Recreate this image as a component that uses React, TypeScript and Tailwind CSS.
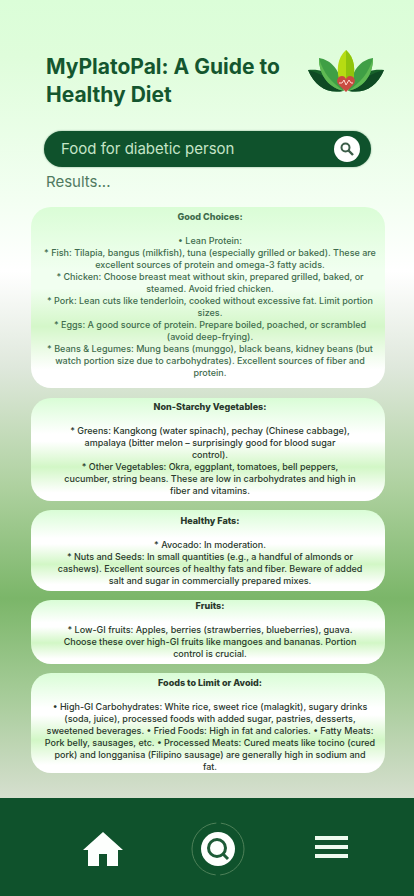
import type { ReactNode } from "react";

type CardProps = {
  title: string;
  lines: string[];
  className: string;
};

function FoodCard({ title, lines, className }: CardProps) {
  return (
    <section className={`rounded-[20px] pl-1 text-center text-[9px] leading-3 ${className}`}>
      <h2 className="mb-3 font-extrabold">{title}</h2>
      <p className="font-medium">
        {lines.map((line) => (
          <span key={line} className="block whitespace-nowrap">
            {line}{" "}
          </span>
        ))}
      </p>
    </section>
  );
}

function NavButton({ label, children }: { label: string; children: ReactNode }) {
  return (
    <button type="button" aria-label={label} className="flex size-13 items-center justify-center">
      {children}
    </button>
  );
}

function LotusLogo() {
  return (
    <svg viewBox="0 0 78 44" className="h-11 w-[78px] shrink-0" aria-hidden="true">
      <path d="M1 21C10 20 21 22 27 29C31 34 34 38 36 42C20 45 8 37 1 21Z" fill="#17612a" />
      <path d="M77 21C68 20 57 22 51 29C47 34 44 38 42 42C58 45 70 37 77 21Z" fill="#17612a" />
      <path d="M1 21C12 24 24 30 36 42C20 45 8 37 1 21Z" fill="#0f4a24" />
      <path d="M77 21C66 24 54 30 42 42C58 45 70 37 77 21Z" fill="#0f4a24" />
      <path d="M12 9C24 11 33 20 37 42C23 39 12 28 12 9Z" fill="#3f9f45" />
      <path d="M12 9C16 24 25 34 37 42C23 39 12 28 12 9Z" fill="#5fb953" />
      <path d="M66 9C54 11 45 20 41 42C55 39 66 28 66 9Z" fill="#3f9f45" />
      <path d="M66 9C62 24 53 34 41 42C55 39 66 28 66 9Z" fill="#5fb953" />
      <path d="M39 1C30 9 29 22 33 34H45C49 22 48 9 39 1Z" fill="#b6dc12" />
      <path d="M39 1C48 9 49 22 45 34H39Z" fill="#8fc40c" />
      <path d="M39 43L32 36C28 32 31 27 35 27C37 27 38 28 39 30C40 28 41 27 43 27C47 27 50 32 46 36Z" fill="#c94b41" />
      <path d="M32 34H35L37 31L39 36L42 31L44 34H46" fill="none" stroke="#ffd9d2" strokeWidth="1" />
    </svg>
  );
}

export default function App() {
  return (
    <div className="flex min-h-screen flex-col bg-[#0f522c] font-['Inter','Noto_Sans',sans-serif]">
      <main className="flex-1 bg-[linear-gradient(180deg,#dbfed8_0%,#dffddb_7%,#f3fff2_25%,#ffffff_34%,#dfe8dc_46%,#aed19f_61%,#7bb669_75%,#a2ca94_86%,#d6dfcf_100%)] pt-[49px] pr-[29px] pb-[25px] pl-[31px]">
        <header className="flex items-start justify-between pl-[15px]">
          <h1 className="w-60 pt-1 text-[21px] leading-7 font-bold text-[#14562f]">
            MyPlatoPal: A Guide to Healthy Diet
          </h1>
          <LotusLogo />
        </header>

        <form
          role="search"
          onSubmit={(event) => event.preventDefault()}
          className="mt-[22px] mr-[14px] ml-[13px] flex h-9 items-center justify-between rounded-full bg-[#0f522c] pr-[11px] pl-[17px] shadow-[0_0_2px_#78a080]"
        >
          <input
            type="text"
            aria-label="Search food"
            defaultValue="Food for diabetic person"
            className="min-w-0 flex-1 bg-transparent text-[15px] leading-5 text-[#c5e5c7] outline-none"
          />
          <button
            type="submit"
            aria-label="Search"
            className="flex size-[26px] items-center justify-center rounded-full bg-white text-[#3c5d49]"
          >
            <svg viewBox="0 0 14 14" className="size-[14px]" fill="none" stroke="currentColor" aria-hidden="true">
              <circle cx="5.5" cy="5.5" r="4" strokeWidth="2" />
              <path d="M8.5 8.5L13 13" strokeWidth="2.4" />
            </svg>
          </button>
        </form>

        <p className="mt-[5px] pl-[15px] text-[15px] leading-5 text-[#507a60]">Results...</p>

        <div className="mt-[15px] flex flex-col">
          <FoodCard
            className="mb-[10px] bg-[linear-gradient(180deg,#dafdd6_0%,#f1fff0_35%,#f1fff0_45%,#d4f7c9_66%,#ffffff_90%)] pt-1 pb-[9px] text-[#3f6c4d]"
            title="Good Choices:"
            lines={[
              "• Lean Protein:",
              "* Fish: Tilapia, bangus (milkfish), tuna (especially grilled or baked). These are",
              "excellent sources of protein and omega-3 fatty acids.",
              "* Chicken: Choose breast meat without skin, prepared grilled, baked, or",
              "steamed. Avoid fried chicken.",
              "* Pork: Lean cuts like tenderloin, cooked without excessive fat. Limit portion",
              "sizes.",
              "* Eggs: A good source of protein. Prepare boiled, poached, or scrambled",
              "(avoid deep-frying).",
              "* Beans & Legumes: Mung beans (munggo), black beans, kidney beans (but",
              "watch portion size due to carbohydrates). Excellent sources of fiber and",
              "protein.",
            ]}
          />
          <FoodCard
            className="mb-[9px] bg-[linear-gradient(180deg,#d9fdd6_0%,#ffffff_35%,#ffffff_42%,#d2f7c6_67%,#ffffff_92%)] pt-[3px] pb-1 text-[#29382b]"
            title="Non-Starchy Vegetables:"
            lines={[
              "* Greens: Kangkong (water spinach), pechay (Chinese cabbage),",
              "ampalaya (bitter melon – surprisingly good for blood sugar",
              "control).",
              "* Other Vegetables: Okra, eggplant, tomatoes, bell peppers,",
              "cucumber, string beans. These are low in carbohydrates and high in",
              "fiber and vitamins.",
            ]}
          />
          <FoodCard
            className="mb-[9px] bg-[linear-gradient(180deg,#d9fdd6_0%,#ffffff_35%,#ffffff_42%,#d2f7c6_67%,#ffffff_92%)] pt-[5px] pb-1 text-[#29382b]"
            title="Healthy Fats:"
            lines={[
              "* Avocado: In moderation.",
              "* Nuts and Seeds: In small quantities (e.g., a handful of almonds or",
              "cashews). Excellent sources of healthy fats and fiber. Beware of added",
              "salt and sugar in commercially prepared mixes.",
            ]}
          />
          <FoodCard
            className="mb-[9px] bg-[linear-gradient(180deg,#d9fdd6_0%,#ffffff_35%,#ffffff_42%,#d2f7c6_67%,#ffffff_92%)] pb-1 text-[#29382b]"
            title="Fruits:"
            lines={[
              "* Low-GI fruits: Apples, berries (strawberries, blueberries), guava.",
              "Choose these over high-GI fruits like mangoes and bananas. Portion",
              "control is crucial.",
            ]}
          />
          <FoodCard
            className="bg-[linear-gradient(180deg,#d9fdd6_0%,#ffffff_35%,#ffffff_42%,#d2f7c6_67%,#ffffff_92%)] pt-1 text-[#29382b]"
            title="Foods to Limit or Avoid:"
            lines={[
              "• High-GI Carbohydrates: White rice, sweet rice (malagkit), sugary drinks",
              "(soda, juice), processed foods with added sugar, pastries, desserts,",
              "sweetened beverages. • Fried Foods: High in fat and calories. • Fatty Meats:",
              "Pork belly, sausages, etc. • Processed Meats: Cured meats like tocino (cured",
              "pork) and longganisa (Filipino sausage) are generally high in sodium and",
              "fat.",
            ]}
          />
        </div>
      </main>

      <nav aria-label="Main" className="flex justify-between bg-[#0f522c] pt-[25px] pr-14 pb-[21px] pl-[77px]">
        <NavButton label="Home">
          <svg viewBox="0 0 40 36" className="h-9 w-10" fill="#fdfffd" aria-hidden="true">
            <path d="M20 1L40 19H35V35H24V23H16V35H5V19H0Z" />
          </svg>
        </NavButton>
        <NavButton label="Search">
          <svg viewBox="0 0 54 54" className="size-[54px] shrink-0" fill="none" aria-hidden="true">
            <circle cx="27" cy="27" r="26" stroke="#4d8058" strokeWidth="1" strokeDasharray="77 4.7" strokeDashoffset="-43" />
            <circle cx="27" cy="27" r="17" fill="#fdfffd" />
            <circle cx="26" cy="26" r="8.5" stroke="#1d5b37" strokeWidth="3" />
            <path d="M32 32L37 37" stroke="#1d5b37" strokeWidth="3" />
          </svg>
        </NavButton>
        <NavButton label="Menu">
          <svg viewBox="0 0 34 26" className="h-[26px] w-[34px]" fill="#eefaef" aria-hidden="true">
            <path d="M0 0H33V4H0ZM0 9H33V13H0ZM0 18H33V22H0Z" />
          </svg>
        </NavButton>
      </nav>
    </div>
  );
}
